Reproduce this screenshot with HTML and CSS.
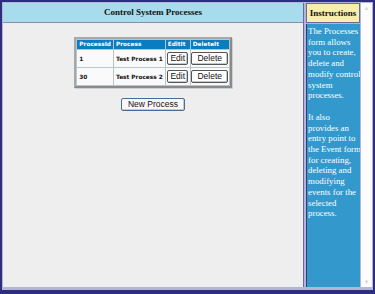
FILE: index.html
```html
<!DOCTYPE html>
<html lang="en">
<head>
  <meta charset="UTF-8">
  <title>Control System Processes</title>
  <link rel="stylesheet" href="styles.css">
</head>
<body>
  <div class="frame">
    <div class="main">
      <div class="main-title">Control System Processes</div>
      <div class="main-body">
        <table class="process-table">
          <tr>
            <th class="col-id">ProcessId</th>
            <th class="col-name">Process</th>
            <th class="col-edit">EditIt</th>
            <th class="col-del">DeleteIt</th>
          </tr>
          <tr>
            <td>1</td>
            <td>Test Process 1</td>
            <td class="center"><button class="btn">Edit</button></td>
            <td class="center"><button class="btn btn-wide">Delete</button></td>
          </tr>
          <tr>
            <td>30</td>
            <td>Test Process 2</td>
            <td class="center"><button class="btn">Edit</button></td>
            <td class="center"><button class="btn btn-wide">Delete</button></td>
          </tr>
        </table>
        <button class="btn new-button">New Process</button>
      </div>
    </div>

    <div class="side">
      <div class="side-title">Instructions</div>
      <div class="side-body">
        <p>The Processes<br>form allows<br>you to create,<br>delete and<br>modify control<br>system<br>processes.</p>
        <p>It also<br>provides an<br>entry point to<br>the Event form<br>for creating,<br>deleting and<br>modifying<br>events for the<br>selected<br>process.</p>
      </div>
    </div>

    <div class="scrollbar">
      <div class="arrow">&#9650;</div>
      <div class="arrow">&#9660;</div>
    </div>
  </div>
</body>
</html>
```

FILE: styles.css
```css
body {
  margin: 0;
  padding: 0;
  width: 375px;
  height: 294px;
  overflow: hidden;
  background: #2e2e80;
}

.frame {
  box-sizing: border-box;
  width: 375px;
  height: 294px;
  border: 2px solid #2e2e80;
  border-bottom-width: 4px;
  background: #b4b4d8;
  padding: 1px 1px 3px 1px;
  display: flex;
  font-family: "Liberation Serif", "DejaVu Serif", serif;
}

.main {
  width: 302px;
  display: flex;
  flex-direction: column;
  background: #eeeeee;
  border-right: 1px solid #6a6a9a;
}

.main-title {
  height: 19px;
  background: #a6dcec;
  border-bottom: 1px solid #8c8cb0;
  text-align: center;
  font-weight: bold;
  font-size: 9px;
  line-height: 19px;
  color: #111;
}

.main-body {
  flex: 1;
  display: flex;
  flex-direction: column;
  align-items: center;
  padding-top: 14px;
}

.process-table {
  table-layout: fixed;
  border-collapse: separate;
  border-spacing: 1px;
  background: #b8c4cc;
  border: 2px solid #a8a8a8;
  border-right-color: #8a8a8a;
  border-bottom-color: #8a8a8a;
  box-shadow: 1px 1px 0 #d0d0d0;
  font-family: "DejaVu Sans", Verdana, sans-serif;
  font-size: 5.8px;
  white-space: nowrap;
}

.process-table th,
.process-table td {
  box-sizing: border-box;
  overflow: hidden;
}

.process-table th {
  background: #0a7cc0;
  color: #fff;
  font-weight: bold;
  text-align: left;
  height: 9px;
  padding: 0 2px;
  line-height: 9px;
}

.process-table td {
  background: #fafafa;
  height: 17px;
  padding: 0 2px;
  color: #111;
  font-weight: bold;
}

.process-table td.center {
  text-align: center;
  padding: 0;
}

.col-id { width: 35px; }
.col-name { width: 50px; }
.col-edit { width: 24px; }
.col-del { width: 38px; }

.btn {
  font-family: "Liberation Sans", Arial, sans-serif;
  font-size: 8.5px;
  color: #111;
  background: #fff;
  border: 1px solid #555;
  border-radius: 2px;
  box-shadow: inset -1px -1px 0 #c8c8c8;
  padding: 0 2px;
  height: 13px;
  line-height: 11px;
  margin: 0;
}

.btn-wide {
  padding: 0 5px;
}

.new-button {
  margin-top: 10px;
  width: 64px;
  height: 13px;
  background: #f8f8f8;
  border-color: #4a6a9a;
}

.side {
  margin-left: 2px;
  width: 54px;
  display: flex;
  flex-direction: column;
}

.side-title {
  height: 18px;
  background: #f6eeaa;
  border: 1px solid #6a6a9a;
  text-align: center;
  font-weight: bold;
  font-size: 9px;
  line-height: 18px;
  color: #111;
}

.side-body {
  flex: 1;
  margin-top: 1px;
  background: #3399cc;
  border-left: 1px solid #3a3a7a;
  color: #fff;
  font-size: 8.8px;
  line-height: 10.7px;
  padding: 2px 0 0 1px;
  white-space: nowrap;
  overflow: hidden;
}

.side-body p {
  margin: 0 0 11px;
}

.scrollbar {
  margin-left: 1px;
  width: 11px;
  background: #fcfcfe;
  display: flex;
  flex-direction: column;
  justify-content: space-between;
  align-items: center;
}

.arrow {
  font-size: 6px;
  color: #d8d8e0;
  line-height: 10px;
}
```
